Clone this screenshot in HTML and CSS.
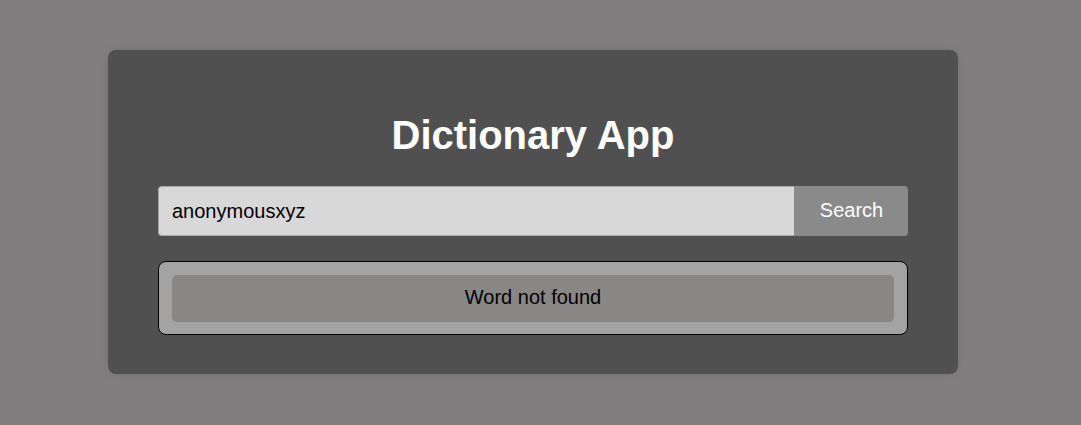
FILE: index.html
```html
<!DOCTYPE html>
<html lang="en">
<head>
<meta charset="utf-8">
<title>Dictionary App</title>
<link rel="stylesheet" href="styles.css">
</head>
<body>
<div class="card">
  <h1 class="title">Dictionary App</h1>
  <div class="search">
    <input class="search-input" type="text" value="anonymousxyz">
    <button class="search-button">Search</button>
  </div>
  <div class="result">
    <div class="result-msg">Word not found</div>
  </div>
</div>
</body>
</html>
```

FILE: styles.css
```css
html, body {
  margin: 0;
  padding: 0;
}
body {
  background: #807e7f;
  font-family: "Liberation Sans", Arial, sans-serif;
  padding: 50px 0 0 108px;
  height: 425px;
  box-sizing: border-box;
}
.card {
  width: 850px;
  box-sizing: border-box;
  background: #505050;
  border-radius: 8px;
  padding: 62px 50px 39px;
  box-shadow: 0 0 10px rgba(0, 0, 0, 0.1);
}
.title {
  margin: 0 0 28px;
  font-size: 40px;
  line-height: 46px;
  font-weight: bold;
  color: #ffffff;
  text-align: center;
}
.search {
  display: flex;
  height: 50px;
}
.search-input {
  flex: 1;
  box-sizing: border-box;
  height: 50px;
  margin: 0;
  padding: 0 13px;
  border: 1px solid #a8a8a8;
  border-right: none;
  border-radius: 4px 0 0 4px;
  background: #d8d8d8;
  font-family: "Liberation Sans", Arial, sans-serif;
  font-size: 20px;
  color: #000;
  outline: none;
}
.search-button {
  width: 114px;
  height: 50px;
  margin: 0;
  padding: 0 0 2px 1px;
  border: none;
  border-radius: 0 4px 4px 0;
  background: #8a8a8a;
  color: #ffffff;
  font-family: "Liberation Sans", Arial, sans-serif;
  font-size: 20px;
}
.result {
  margin-top: 25px;
  border: 1px solid #000;
  border-radius: 8px;
  background: #a3a3a3;
  padding: 13px 13px 12px;
}
.result-msg {
  box-sizing: border-box;
  height: 47px;
  padding-bottom: 3px;
  display: flex;
  align-items: center;
  justify-content: center;
  background: #888785;
  border-radius: 5px;
  font-size: 20px;
  color: #000;
}
```
